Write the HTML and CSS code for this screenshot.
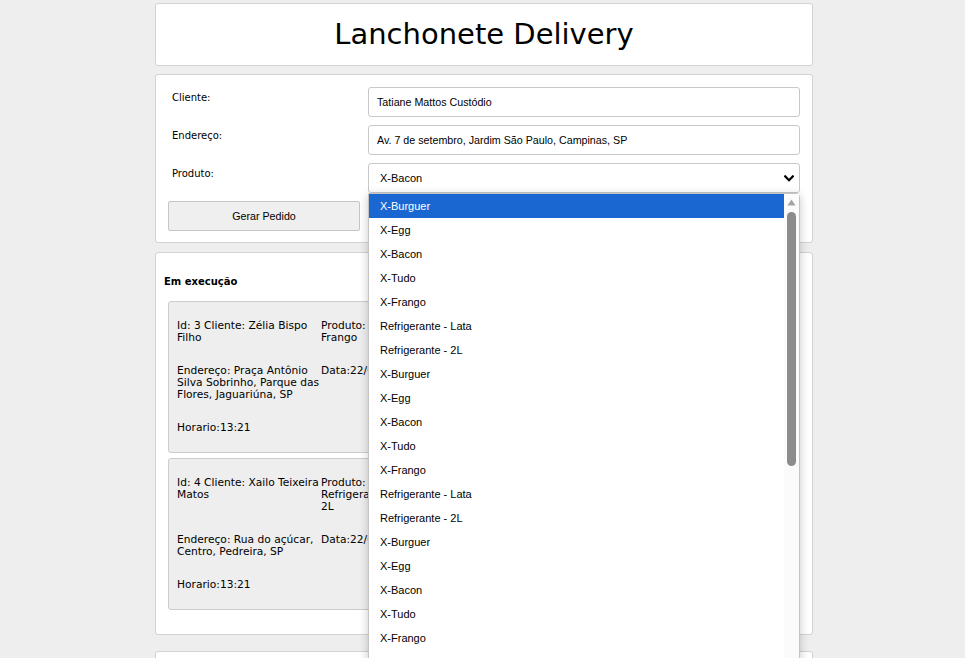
FILE: index.html
```html
<!DOCTYPE html>
<html lang="pt-BR">
<head>
<meta charset="utf-8">
<title>Lanchonete Delivery</title>
<link rel="stylesheet" href="styles.css">
</head>
<body>
<div class="container">
  <header class="card header">
    <h1 class="title">Lanchonete Delivery</h1>
  </header>

  <form class="card form">
    <label class="label">Cliente:</label>
    <div class="field">Tatiane Mattos Custódio</div>

    <label class="label">Endereço:</label>
    <div class="field">Av. 7 de setembro, Jardim São Paulo, Campinas, SP</div>

    <label class="label">Produto:</label>
    <div class="select-wrap">
      <div class="select">
        <span>X-Bacon</span>
        <svg class="chevron" width="10" height="7" viewBox="0 0 10 7"><polyline points="1.2,1.4 5,5.2 8.8,1.4" fill="none" stroke="#000" stroke-width="2.2" stroke-linecap="square"/></svg>
      </div>
      <div class="listbox">
        <ul class="options">
          <li class="option selected">X-Burguer</li>
          <li class="option">X-Egg</li>
          <li class="option">X-Bacon</li>
          <li class="option">X-Tudo</li>
          <li class="option">X-Frango</li>
          <li class="option">Refrigerante - Lata</li>
          <li class="option">Refrigerante - 2L</li>
          <li class="option">X-Burguer</li>
          <li class="option">X-Egg</li>
          <li class="option">X-Bacon</li>
          <li class="option">X-Tudo</li>
          <li class="option">X-Frango</li>
          <li class="option">Refrigerante - Lata</li>
          <li class="option">Refrigerante - 2L</li>
          <li class="option">X-Burguer</li>
          <li class="option">X-Egg</li>
          <li class="option">X-Bacon</li>
          <li class="option">X-Tudo</li>
          <li class="option">X-Frango</li>
          <li class="option">Refrigerante - Lata</li>
        </ul>
        <div class="scrollbar">
          <svg class="arrow" width="9" height="7" viewBox="0 0 9 7"><path d="M4.5 0.5 L8.6 6.5 L0.4 6.5 Z" fill="#a3a3a3"/></svg>
          <div class="thumb"></div>
        </div>
      </div>
    </div>

    <button type="button" class="button">Gerar Pedido</button>
  </form>

  <section class="card section">
    <h2 class="section-title">Em execução</h2>
    <div class="orders">
      <div class="order">
        <p>Id: 3 Cliente: Zélia Bispo Filho</p>
        <p>Produto: Frango</p>
        <p></p>
        <p>Endereço: Praça Antônio Silva Sobrinho, Parque das Flores, Jaguariúna, SP</p>
        <p class="clip">Data:22/04/2023</p>
        <p></p>
        <p>Horario:13:21</p>
        <p></p>
        <p></p>
      </div>
      <div class="order">
        <p>Id: 4 Cliente: Xailo Teixeira Matos</p>
        <p>Produto: Refrigerante - 2L</p>
        <p></p>
        <p>Endereço: Rua do açúcar, Centro, Pedreira, SP</p>
        <p class="clip">Data:22/04/2023</p>
        <p></p>
        <p>Horario:13:21</p>
        <p></p>
        <p></p>
      </div>
    </div>
  </section>

  <section class="card section next"></section>
</div>
</body>
</html>
```

FILE: styles.css
```css
html {
  overflow: hidden;
}

body {
  margin: 0;
  padding: 3px 0 0 3px;
  background: #eeeeee;
  font-family: "DejaVu Sans", Verdana, sans-serif;
  color: #000;
}

.container {
  width: 658px;
  margin: 0 auto;
}

.card {
  background: #fff;
  border: 1px solid #d2d2d2;
  border-radius: 3px;
  box-sizing: border-box;
}

.header {
  padding: 13px 0 14px;
  text-align: center;
}

.title {
  margin: 0;
  font-size: 29px;
  font-weight: normal;
  line-height: 34px;
}

.form {
  margin-top: 8px;
  display: grid;
  grid-template-columns: 192px 1fr;
  column-gap: 8px;
  row-gap: 8px;
  padding: 12px 12px 11px 12px;
}

.label {
  font-size: 10px;
  line-height: 12px;
  padding: 5px 0 0 4px;
}

.field,
.select {
  height: 30px;
  box-sizing: border-box;
  border: 1px solid #c8c8c8;
  border-radius: 3px;
  background: #fff;
  font-family: "Liberation Sans", Arial, sans-serif;
  font-size: 10.7px;
  display: flex;
  align-items: center;
  padding: 0 8px;
  white-space: nowrap;
}

.select-wrap {
  position: relative;
}

.select {
  justify-content: space-between;
  padding: 0 5px 0 11px;
  font-size: 11px;
}

.chevron {
  display: block;
}

.listbox {
  position: absolute;
  top: 100%;
  left: 0;
  right: 0;
  z-index: 10;
  display: flex;
  background: #fff;
  border: 1px solid #c4c4c4;
  border-radius: 0 4px 0 0;
  box-shadow: 0 2px 10px rgba(0, 0, 0, 0.22);
}

.options {
  list-style: none;
  margin: 0;
  padding: 0;
  flex: 1;
}

.option {
  height: 24px;
  line-height: 24px;
  padding-left: 11px;
  font-family: "Liberation Sans", Arial, sans-serif;
  font-size: 11px;
  white-space: nowrap;
}

.option.selected {
  background: #1a67d2;
  color: #fff;
}

.scrollbar {
  width: 15px;
  background: #fbfbfb;
  display: flex;
  flex-direction: column;
  align-items: center;
  padding-top: 5px;
}

.arrow {
  display: block;
}

.thumb {
  margin-top: 6px;
  width: 9px;
  height: 254px;
  border-radius: 4.5px;
  background: #8c8c8c;
}

.button {
  height: 30px;
  border: 1px solid #c6c6c6;
  border-radius: 2px;
  background: #efefef;
  font-family: "Liberation Sans", Arial, sans-serif;
  font-size: 10.7px;
  color: #000;
  padding: 0;
}

.section {
  margin-top: 9px;
  padding: 8px;
}

.section-title {
  margin: 15px 0 13px;
  font-size: 10px;
  font-weight: bold;
  line-height: 12px;
}

.orders {
  display: flex;
  flex-direction: column;
  gap: 5px;
  padding: 0 4px 16px;
}

.order {
  background: #eeeeee;
  border: 1px solid #cccccc;
  border-radius: 3px;
  padding: 18px 8px;
  display: grid;
  grid-template-columns: 144px 80px 1fr;
  row-gap: 21px;
  font-size: 10.667px;
  line-height: 12px;
}

.order p {
  margin: 0;
}

.order .clip {
  white-space: nowrap;
  overflow: hidden;
}

.next {
  margin-top: 16px;
  height: 120px;
}
```
